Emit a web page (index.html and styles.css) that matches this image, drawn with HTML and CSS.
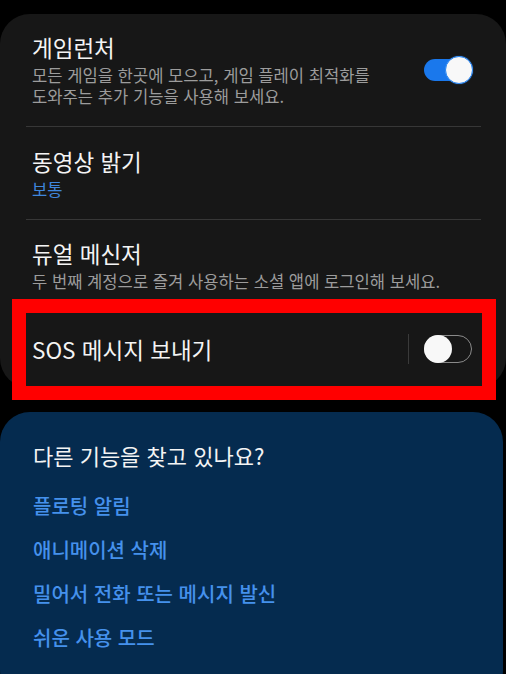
FILE: index.html
```html
<!DOCTYPE html>
<html lang="ko">
<head>
<meta charset="utf-8">
<link rel="stylesheet" href="styles.css">
</head>
<body>
<div class="page">
  <section class="card">
    <div class="row row-first">
      <div class="text">
        <div class="title">게임런처</div>
        <div class="sub">모든 게임을 한곳에 모으고, 게임 플레이 최적화를<br>도와주는 추가 기능을 사용해 보세요.</div>
      </div>
      <div class="switch on"><span class="thumb"></span></div>
    </div>
    <div class="divider"></div>
    <div class="row">
      <div class="text">
        <div class="title">동영상 밝기</div>
        <div class="sub value">보통</div>
      </div>
    </div>
    <div class="divider"></div>
    <div class="row row-third">
      <div class="text">
        <div class="title">듀얼 메신저</div>
        <div class="sub">두 번째 계정으로 즐겨 사용하는 소셜 앱에 로그인해 보세요.</div>
      </div>
    </div>
    <div class="row row-sos">
      <div class="text">
        <div class="title">SOS 메시지 보내기</div>
      </div>
      <div class="vline"></div>
      <div class="switch off"><span class="thumb"></span></div>
    </div>
  </section>

  <section class="card-blue">
    <div class="blue-head">다른 기능을 찾고 있나요?</div>
    <div class="link">플로팅 알림</div>
    <div class="link">애니메이션 삭제</div>
    <div class="link">밀어서 전화 또는 메시지 발신</div>
    <div class="link">쉬운 사용 모드</div>
  </section>

  <div class="highlight"></div>
</div>
</body>
</html>
```
FILE: styles.css
```css
html, body {
  margin: 0;
  padding: 0;
  background: #000;
}
body {
  width: 506px;
  height: 674px;
  overflow: hidden;
  font-family: "Noto Sans CJK KR", "Noto Sans", sans-serif;
  color: #f2f2f2;
}
.page {
  position: relative;
  padding-top: 14px;
}
.card {
  background: #171717;
  border-radius: 30px;
  margin: 0;
  height: 374px;
  box-sizing: border-box;
}
.row {
  display: flex;
  align-items: center;
  padding: 20px 35px 19px 32px;
}
.row-first {
  padding-top: 19px;
}
.row-third {
  padding-top: 19px;
  padding-bottom: 18px;
}
.row-sos {
  height: 78px;
  padding-top: 0;
  padding-bottom: 0;
  box-sizing: border-box;
}
.text {
  flex: 1;
  min-width: 0;
}
.title {
  font-size: 22.5px;
  line-height: 28px;
  color: #f4f4f4;
  font-weight: 400;
}
.sub {
  margin-top: 4px;
  font-size: 16.6px;
  line-height: 21px;
  color: #9c9c9c;
  white-space: nowrap;
}
.sub.value {
  color: #3f86dc;
}
.divider {
  height: 1px;
  background: #373737;
  margin: 0 25px 0 26px;
}
.switch {
  position: relative;
  width: 48px;
  height: 28px;
  box-sizing: border-box;
  border-radius: 14px;
  flex: none;
}
.switch.on {
  margin-right: -1px;
}
.switch.on::before {
  content: "";
  position: absolute;
  left: 0;
  right: 2px;
  top: 3px;
  bottom: 3px;
  border-radius: 11px;
  background: #1a78ec;
}
.switch.off {
  border: 1.5px solid #8a8a8a;
  margin-right: -1px;
}
.thumb {
  position: absolute;
  width: 28px;
  height: 28px;
  border-radius: 50%;
  background: #f8f8f8;
  box-sizing: border-box;
}
.switch.on .thumb {
  right: -1px;
  top: 0;
  border: 1.5px solid #2a86f2;
  box-shadow: 0 0 1px #2a86f2;
}
.switch.off .thumb {
  left: -1.5px;
  top: -1.5px;
}
.vline {
  width: 1px;
  height: 30px;
  background: #3a3a3a;
  margin-right: 15px;
  flex: none;
}
.card-blue {
  margin-top: 24px;
  background: #052b4f;
  border-radius: 30px;
  margin-right: 3px;
  padding: 29px 32px 40px 33px;
}
.blue-head {
  font-size: 22px;
  line-height: 28px;
  color: #f4f4f4;
  margin-bottom: 15px;
}
.link {
  font-size: 20px;
  line-height: 44px;
  height: 44px;
  color: #4591ec;
  font-weight: 500;
}
.highlight {
  position: absolute;
  left: 12px;
  top: 299px;
  width: 484px;
  height: 101px;
  box-sizing: border-box;
  border: 14px solid #ff0000;
}
```
